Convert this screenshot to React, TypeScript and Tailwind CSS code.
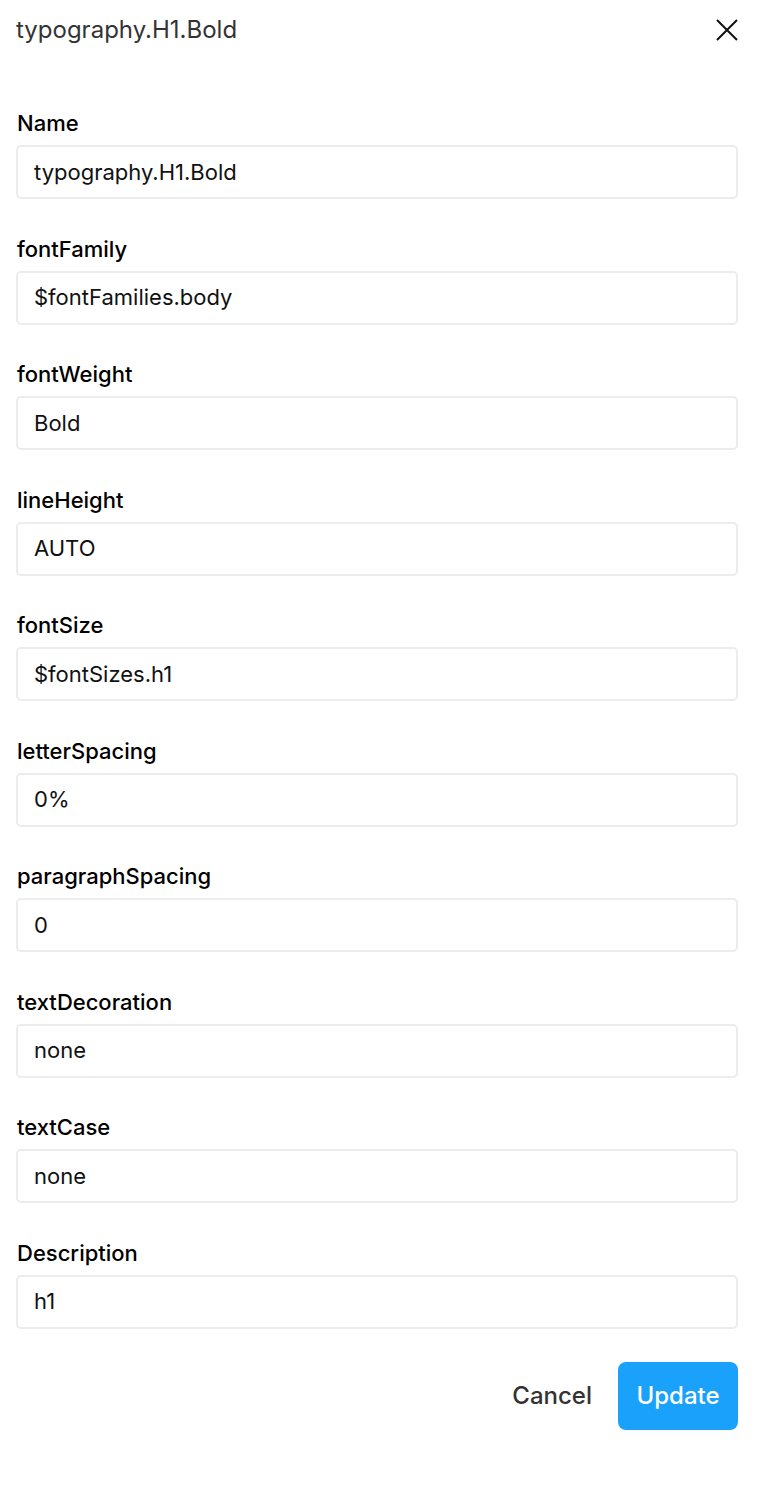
import React from "react";

const fields: [string, string][] = [
  ["Name", "typography.H1.Bold"],
  ["fontFamily", "$fontFamilies.body"],
  ["fontWeight", "Bold"],
  ["lineHeight", "AUTO"],
  ["fontSize", "$fontSizes.h1"],
  ["letterSpacing", "0%"],
  ["paragraphSpacing", "0"],
  ["textDecoration", "none"],
  ["textCase", "none"],
  ["Description", "h1"],
];

export default function App() {
  return (
    <div
      className="w-[768px] min-h-[1488px] bg-white pl-4 pr-[30px]"
      style={{ fontFamily: "Inter, 'Noto Sans', sans-serif" }}
    >
      <div className="flex h-[60px] items-center justify-between">
        <span className="text-[24px] text-[#333333] leading-none">typography.H1.Bold</span>
        <svg width="24" height="24" viewBox="0 0 24 24" className="mr-[-1px]">
          <path d="M2 2 L22 22 M22 2 L2 22" stroke="#111" strokeWidth="2" fill="none" />
        </svg>
      </div>
      <div className="mt-[51px] flex flex-col gap-[37.55px]">
        {fields.map(([label, value]) => (
          <div key={label} className="flex flex-col">
            <label className="h-6 text-[22px] font-medium leading-6 text-black px-[1px]">
              {label}
            </label>
            <div className="mt-[10px] flex h-[54px] items-center rounded-[5px] border-2 border-[#ececec] px-[16px] text-[22px] text-[#111111]">
              {value}
            </div>
          </div>
        ))}
      </div>
      <div className="mt-[33px] flex items-center justify-end">
        <button className="mr-[26px] text-[24px] font-medium text-[#333333]">Cancel</button>
        <button className="h-[68px] w-[120px] rounded-[8px] bg-[#1aa1fb] text-[24px] font-medium text-white">
          Update
        </button>
      </div>
    </div>
  );
}
